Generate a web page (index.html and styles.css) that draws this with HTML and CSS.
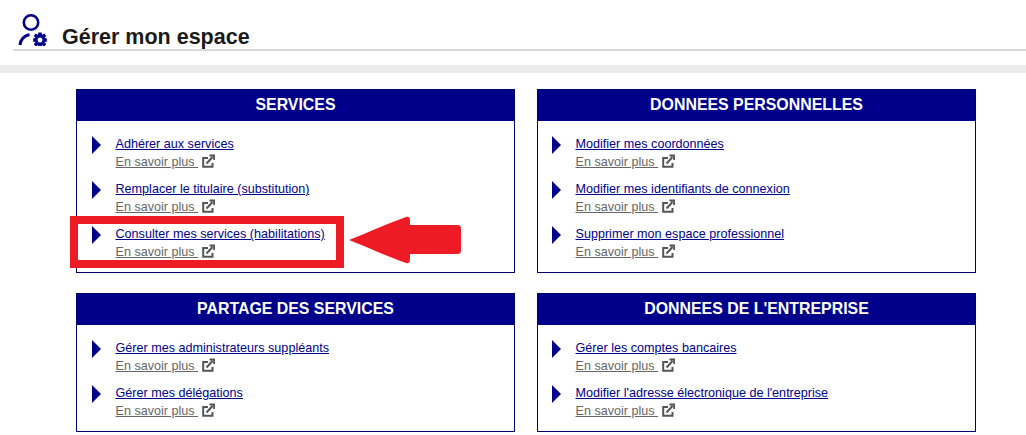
FILE: index.html
```html
<!DOCTYPE html>
<html lang="fr">
<head>
    <meta charset="UTF-8">
    <title>Gérer mon espace</title>
    <link rel="stylesheet" href="styles.css">
</head>
<body>
    <div class="page-title">
        <svg class="title-icon" width="30" height="33" viewBox="0 0 30 33">
            <circle cx="13" cy="9.5" r="7.2" fill="none" stroke="#00008b" stroke-width="2.6"/>
            <path d="M2 32 C2.5 26.5 6 23 11.5 21.5" fill="none" stroke="#00008b" stroke-width="3"/>
            <path d="M20.4 19.5H23.6L24.2 21.7L26.4 20.6L28.2 23L26.6 24.8L28.9 25.6V28.4L26.6 29.2L28.2 31L26.4 33.4L24.2 32.3L23.6 33H20.4L19.8 32.3L17.6 33.4L15.8 31L17.4 29.2L15.1 28.4V25.6L17.4 24.8L15.8 23L17.6 20.6L19.8 21.7ZM22 24.6A2.4 2.4 0 1 0 22.01 24.6Z" fill="#00008b" fill-rule="evenodd"/>
        </svg>
        <h1>Gérer mon espace</h1>
    </div>
    <div class="band"></div>

    <div class="cards">
        <section class="card card-tall">
            <h2>SERVICES</h2>
            <ul>
                <li>
                    <a class="main-link" href="#">Adhérer aux services</a>
                    <a class="more-link" href="#">En savoir plus&nbsp;</a>
                    <svg class="ext" width="13" height="14" viewBox="0 0 13 14"><path d="M6 4H1.2V12.8H10.5V9M4.5 9.5L10.5 3M7.5 1.5H12.2V6" fill="none" stroke="#555" stroke-width="2"/></svg>
                </li>
                <li>
                    <a class="main-link" href="#">Remplacer le titulaire (substitution)</a>
                    <a class="more-link" href="#">En savoir plus&nbsp;</a>
                    <svg class="ext" width="13" height="14" viewBox="0 0 13 14"><path d="M6 4H1.2V12.8H10.5V9M4.5 9.5L10.5 3M7.5 1.5H12.2V6" fill="none" stroke="#555" stroke-width="2"/></svg>
                </li>
                <li>
                    <a class="main-link" href="#">Consulter mes services (habilitations)</a>
                    <a class="more-link" href="#">En savoir plus&nbsp;</a>
                    <svg class="ext" width="13" height="14" viewBox="0 0 13 14"><path d="M6 4H1.2V12.8H10.5V9M4.5 9.5L10.5 3M7.5 1.5H12.2V6" fill="none" stroke="#555" stroke-width="2"/></svg>
                </li>
            </ul>
            <div class="highlight"></div>
            <svg class="arrow" width="114" height="50" viewBox="0 0 114 50">
                <path d="M0 24 C20 16 40 7 57 1 C60 0 61 2 61 5 V9 H108 C111 9 112 10 112 13 V34 C112 37 111 38 108 38 H61 V42 C61 46 60 48 57 47 C40 41 20 32 0 24 Z" fill="#ed1c24"/>
            </svg>
        </section>

        <section class="card card-tall">
            <h2>DONNEES PERSONNELLES</h2>
            <ul>
                <li>
                    <a class="main-link" href="#">Modifier mes coordonnées</a>
                    <a class="more-link" href="#">En savoir plus&nbsp;</a>
                    <svg class="ext" width="13" height="14" viewBox="0 0 13 14"><path d="M6 4H1.2V12.8H10.5V9M4.5 9.5L10.5 3M7.5 1.5H12.2V6" fill="none" stroke="#555" stroke-width="2"/></svg>
                </li>
                <li>
                    <a class="main-link" href="#">Modifier mes identifiants de connexion</a>
                    <a class="more-link" href="#">En savoir plus&nbsp;</a>
                    <svg class="ext" width="13" height="14" viewBox="0 0 13 14"><path d="M6 4H1.2V12.8H10.5V9M4.5 9.5L10.5 3M7.5 1.5H12.2V6" fill="none" stroke="#555" stroke-width="2"/></svg>
                </li>
                <li>
                    <a class="main-link" href="#">Supprimer mon espace professionnel</a>
                    <a class="more-link" href="#">En savoir plus&nbsp;</a>
                    <svg class="ext" width="13" height="14" viewBox="0 0 13 14"><path d="M6 4H1.2V12.8H10.5V9M4.5 9.5L10.5 3M7.5 1.5H12.2V6" fill="none" stroke="#555" stroke-width="2"/></svg>
                </li>
            </ul>
        </section>

        <section class="card">
            <h2>PARTAGE DES SERVICES</h2>
            <ul>
                <li>
                    <a class="main-link" href="#">Gérer mes administrateurs suppléants</a>
                    <a class="more-link" href="#">En savoir plus&nbsp;</a>
                    <svg class="ext" width="13" height="14" viewBox="0 0 13 14"><path d="M6 4H1.2V12.8H10.5V9M4.5 9.5L10.5 3M7.5 1.5H12.2V6" fill="none" stroke="#555" stroke-width="2"/></svg>
                </li>
                <li>
                    <a class="main-link" href="#">Gérer mes délégations</a>
                    <a class="more-link" href="#">En savoir plus&nbsp;</a>
                    <svg class="ext" width="13" height="14" viewBox="0 0 13 14"><path d="M6 4H1.2V12.8H10.5V9M4.5 9.5L10.5 3M7.5 1.5H12.2V6" fill="none" stroke="#555" stroke-width="2"/></svg>
                </li>
            </ul>
        </section>

        <section class="card">
            <h2>DONNEES DE L'ENTREPRISE</h2>
            <ul>
                <li>
                    <a class="main-link" href="#">Gérer les comptes bancaires</a>
                    <a class="more-link" href="#">En savoir plus&nbsp;</a>
                    <svg class="ext" width="13" height="14" viewBox="0 0 13 14"><path d="M6 4H1.2V12.8H10.5V9M4.5 9.5L10.5 3M7.5 1.5H12.2V6" fill="none" stroke="#555" stroke-width="2"/></svg>
                </li>
                <li>
                    <a class="main-link" href="#">Modifier l'adresse électronique de l'entreprise</a>
                    <a class="more-link" href="#">En savoir plus&nbsp;</a>
                    <svg class="ext" width="13" height="14" viewBox="0 0 13 14"><path d="M6 4H1.2V12.8H10.5V9M4.5 9.5L10.5 3M7.5 1.5H12.2V6" fill="none" stroke="#555" stroke-width="2"/></svg>
                </li>
            </ul>
        </section>
    </div>
</body>
</html>
```

FILE: styles.css
```css
html, body {
    overflow: hidden;
}
body {
    margin: 0;
    background-color: white;
    font-family: "Liberation Sans", Arial, sans-serif;
    font-size: 12.6px;
}
.page-title {
    display: flex;
    align-items: flex-end;
    height: 49px;
    margin-left: 13px;
    border-bottom: 2px solid #d9d9d9;
}
.title-icon {
    margin: 0 14px 3px 5px;
}
h1 {
    margin: 0 0 -1px 0;
    font-size: 21.5px;
    line-height: 26px;
    color: #1a1a1a;
}
.band {
    height: 8px;
    margin-top: 14px;
    background-color: #ebebeb;
}
.cards {
    display: grid;
    grid-template-columns: 439px 439px;
    grid-template-rows: 184px 139px;
    column-gap: 22px;
    row-gap: 20px;
    margin: 16px 0 0 76px;
}
.card {
    position: relative;
    border: 1px solid #00006b;
}
h2 {
    margin: 0;
    height: 31px;
    background-color: #00008b;
    color: white;
    font-size: 15.9px;
    line-height: 30px;
    text-align: center;
}
ul {
    list-style: none;
    margin: 0;
    padding: 14px 0 0 38.5px;
}
.card:nth-child(even) ul {
    padding-left: 37.5px;
}
li {
    position: relative;
    height: 45px;
    line-height: 18px;
}
li::before {
    content: "";
    position: absolute;
    left: -23.5px;
    top: 1px;
    border-left: 9px solid #00008b;
    border-top: 9px solid transparent;
    border-bottom: 9px solid transparent;
}
.main-link {
    display: block;
    color: #00008b;
}
.more-link {
    color: #666;
}
.ext {
    margin-left: 0;
    vertical-align: -2px;
}
.highlight {
    position: absolute;
    left: -7px;
    top: 126px;
    width: 258px;
    height: 36px;
    border: 8px solid #ed1c24;
}
.arrow {
    position: absolute;
    left: 272px;
    top: 126px;
}
```
